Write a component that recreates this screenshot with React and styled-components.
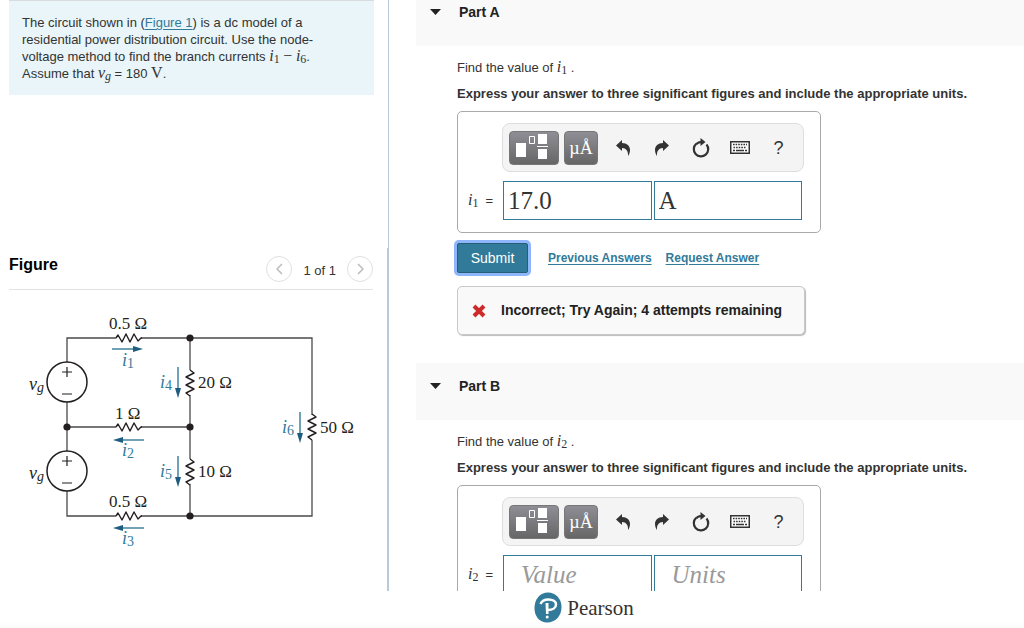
import React, { useState } from 'react';
import styled, { createGlobalStyle } from 'styled-components';

const teal = '#327a99';
const sans = '"Liberation Sans", Arial, sans-serif';
const serif = '"Liberation Serif", "Times New Roman", serif';

const GlobalStyle = createGlobalStyle`
  * {
    box-sizing: border-box;
  }

  body {
    margin: 0;
    background: #fff;
    color: #333;
    font: 13px/17px ${sans};
  }
`;

const Page = styled.div`
  display: flex;
  flex-direction: column;
  height: 100vh;
`;

const Main = styled.main`
  display: flex;
  flex: 1;
  min-height: 0;
  overflow: hidden;
`;

const Sidebar = styled.aside`
  display: flex;
  flex: none;
  flex-direction: column;
  width: 389px;
`;

const ProblemPane = styled.section`
  height: 248px;
  padding: 0 14px 0 9px;
  border-right: 1px solid #b9c9dc;
`;

const Statement = styled.p`
  margin: 0;
  padding: 13px 32px 13px 13px;
  border-top: 1px solid #d8dcdd;
  background: #e9f5f8;
`;

const TextLink = styled.a`
  color: ${teal};
  text-decoration: underline;
  text-underline-offset: 2px;
`;

const MathText = styled.span`
  font-family: ${serif};
  font-size: 16px;
  font-style: ${({ $upright }) => ($upright ? 'normal' : 'italic')};
  line-height: 1;

  sub {
    font-size: 12px;
    font-style: ${({ $italicSub }) => ($italicSub ? 'italic' : 'normal')};
    line-height: 0;
    vertical-align: -2px;
  }
`;

const FigurePane = styled.section`
  flex: 1;
  border-right: 2px solid #b9c9dc;
`;

const FigureHeader = styled.header`
  display: flex;
  align-items: center;
  justify-content: space-between;
  height: 42px;
  margin: 0 14px 0 9px;
  border-bottom: 1px solid #e2e2e2;

  h2 {
    margin: 0;
    padding-bottom: 8px;
    color: #000;
    font-size: 16px;
  }
`;

const Pager = styled.nav`
  display: flex;
  align-items: center;
  gap: 11px;

  span {
    padding-top: 3px;
  }
`;

const PagerButton = styled.button`
  display: flex;
  align-items: center;
  justify-content: center;
  width: 26px;
  height: 26px;
  padding: 0;
  border: 1px solid #e0e0e0;
  border-radius: 50%;
  background: #fff;
`;

const Circuit = styled.svg`
  display: block;
  width: 386px;
  height: 270px;
  font-family: ${serif};
  font-size: 17px;
  fill: #231f20;

  .var {
    font-size: 18px;
    font-style: italic;
  }

  .var-sub {
    font-size: 14px;
    font-style: italic;
  }

  .sub {
    font-size: 14px;
  }

  .current {
    fill: ${teal};
  }
`;

const Parts = styled.div`
  flex: 1;
  min-width: 0;
  padding-left: 27px;
`;

const Part = styled.section`
  margin-bottom: 28px;
`;

const PartHeader = styled.header`
  display: flex;
  gap: 18px;
  height: ${({ $first }) => ($first ? 46 : 57)}px;
  padding: ${({ $first }) => ($first ? 4 : 15)}px 14px 0;
  background: #f9f9f9;

  h3 {
    margin: 0;
    color: #222;
    font-size: 14px;
  }
`;

const Toggle = styled.button`
  display: flex;
  align-items: center;
  height: 16px;
  padding: 0;
  border: 0;
  background: none;
`;

const PartBody = styled.div`
  padding: 13px 16px 0 41px;

  p {
    margin: 0 0 9px;
  }
`;

const AnswerBox = styled.div`
  width: 364px;
  height: 122px;
  padding: 11px 16px 11px 10px;
  border: 1px solid #a9a9a9;
  border-radius: 5px;
`;

const Toolbar = styled.div`
  display: flex;
  align-items: center;
  height: 49px;
  margin-left: 34px;
  padding-left: 6px;
  border: 1px solid #dedede;
  border-radius: 8px;
  background: #f4f4f4;
`;

const PaletteButton = styled.button`
  display: flex;
  align-items: center;
  justify-content: center;
  width: ${({ $wide }) => ($wide ? 50 : 34)}px;
  height: 34px;
  margin-right: 5px;
  padding: 0;
  border: 1px solid #777;
  border-radius: 4px;
  background: linear-gradient(#8f8e96, #666);
  color: #fff;
  font: 18px/32px ${serif};
`;

const ToolButton = styled.button`
  display: flex;
  align-items: center;
  justify-content: center;
  width: 39px;
  height: 34px;
  padding: 0;
  border: 0;
  background: none;
  color: #333;
  font: 18px/34px ${sans};
`;

const AnswerRow = styled.div`
  display: flex;
  align-items: center;
  gap: 2px;
  margin: 9px 2px 0 0;

  label {
    display: flex;
    align-items: baseline;
    gap: 7px;
    width: 33px;
  }
`;

const AnswerInput = styled.input`
  flex: 1;
  min-width: 0;
  height: 39px;
  padding: 0 ${({ $empty }) => ($empty ? 17 : 4)}px;
  border: 1px solid ${teal};
  border-radius: 0;
  color: #333;
  font: 25px/30px ${serif};

  &::placeholder {
    color: #999;
    font-style: italic;
    opacity: 1;
  }
`;

const Actions = styled.div`
  display: flex;
  align-items: center;
  gap: 14px;
  margin-top: 10px;
  font-size: 12px;
  font-weight: bold;
`;

const SubmitButton = styled.button`
  width: 71px;
  height: 30px;
  margin-right: 6px;
  padding: 0;
  border: 1px solid #235f78;
  border-radius: 2px;
  background: ${teal};
  box-shadow: 0 0 0 3px #8fb5fa;
  color: #fff;
  font: 14px/17px ${sans};
`;

const Feedback = styled.div`
  display: flex;
  align-items: center;
  gap: 15px;
  width: 348px;
  height: 49px;
  margin-top: 13px;
  padding-left: 14px;
  border: 1px solid #c8c8c8;
  border-radius: 5px;
  background: #f9f9f9;
  box-shadow: 1px 1px 1px #bbb;
  color: #222;
  font-size: 14px;
  font-weight: bold;
  white-space: nowrap;
`;

const Footer = styled.footer`
  display: flex;
  flex: none;
  align-items: center;
  justify-content: center;
  gap: 5px;
  height: 37px;
  padding: 0 0 4px 144px;
  background: linear-gradient(#fff 30px, #fbfbfb);
  color: #37322f;
  font: 21px/24px ${serif};
`;

const Variable = ({ name = 'i', sub }) => (
  <MathText $italicSub={name === 'v'}>
    {name}
    <sub>{sub}</sub>
  </MathText>
);

// both resistors start on the wire at x, y and run for about 25px
const HResistor = ({ x, y }) => (
  <path d={`M${x} ${y}l2-3 4 7 4-8 4 8 4-8 4 7 3-3h1`} />
);

const VResistor = ({ x, y }) => (
  <path d={`M${x} ${y}l4 3-8 4 8 4-8 4 8 4-8 4 4 3`} />
);

const Arrow = ({ x, y, dir }) => {
  const angle = { right: 0, down: 90, left: 180 }[dir];
  return (
    <g transform={`translate(${x} ${y}) rotate(${angle})`}>
      <path d="M0 0H24" stroke={teal} strokeWidth="1.4" />
      <path d="M21-3L31 0L21 3Z" fill="#1f5d80" />
    </g>
  );
};

const Current = ({ x, y, sub }) => (
  <text className="current" x={x} y={y}>
    <tspan className="var">i</tspan>
    <tspan className="sub" dy="2">{sub}</tspan>
  </text>
);

const Source = ({ y }) => (
  <g>
    <circle cx="67" cy={y} r="20" fill="#fff" stroke="#231f20" strokeWidth="1.5" />
    <path d={`M62 ${y - 10}h10M67 ${y - 15}v10M62 ${y + 12}h10`} stroke="#231f20" strokeWidth="1.2" />
    <text x="29" y={y + 8}>
      <tspan className="var">v</tspan>
      <tspan className="var-sub" dy="2">g</tspan>
    </text>
  </g>
);

const CircuitDiagram = () => (
  <Circuit viewBox="0 290 386 270" role="img" aria-label="Residential power distribution circuit">
    <g fill="none" stroke="#4a4a4a" strokeWidth="1.3">
      <path d="M116 338H67V516H116M141 338H312V415M312 440V516H141M67 427H116M141 427H190M190 338V370M190 395V459M190 484V516" />
    </g>
    <g fill="none" stroke="#231f20" strokeWidth="1.4" strokeLinejoin="round">
      <HResistor x={116} y={338} />
      <HResistor x={116} y={427} />
      <HResistor x={116} y={516} />
      <VResistor x={190} y={370} />
      <VResistor x={190} y={459} />
      <VResistor x={312} y={414} />
    </g>
    {[[190, 338], [67, 427], [190, 427], [190, 516]].map(([cx, cy]) => (
      <circle key={`${cx}-${cy}`} cx={cx} cy={cy} r="3.6" />
    ))}
    <Source y={382} />
    <Source y={471} />
    <Arrow x={112} y={349} dir="right" />
    <Arrow x={144} y={440} dir="left" />
    <Arrow x={144} y={528} dir="left" />
    <Arrow x={178} y={367} dir="down" />
    <Arrow x={178} y={456} dir="down" />
    <Arrow x={300} y={412} dir="down" />
    <text x="109" y="329">0.5 Ω</text>
    <text x="115" y="419">1 Ω</text>
    <text x="109" y="507">0.5 Ω</text>
    <text x="198" y="388">20 Ω</text>
    <text x="198" y="477">10 Ω</text>
    <text x="320" y="433">50 Ω</text>
    <Current x={122} y={366} sub="1" />
    <Current x={122} y={456} sub="2" />
    <Current x={122} y={544} sub="3" />
    <Current x={160} y={388} sub="4" />
    <Current x={160} y={477} sub="5" />
    <Current x={282} y={433} sub="6" />
  </Circuit>
);

const TemplateIcon = () => (
  <svg width="36" height="28" viewBox="0 0 36 28" fill="#fff">
    <path d="M0 9h10v14H0zM22 0h9v10h-9zM22 15h9v10h-9zM21 12h11v1H21z" />
    <path d="M13.5 2.5h5v7h-5z" fill="none" stroke="#fff" />
  </svg>
);

const UndoIcon = ({ flip }) => (
  <svg width="14" height="16" viewBox="0 0 14 16" fill="#333">
    <path
      transform={flip ? 'matrix(-1 0 0 1 14 0)' : undefined}
      d="M0 5.5L6 0V3C11 3 14 6 14 10C14 12.5 13 15 12 16C12.5 11 10 8 6 8V11Z"
    />
  </svg>
);

const ResetIcon = () => (
  <svg width="18" height="20" viewBox="0 0 18 20">
    <path d="M4.2 5.8A7.2 7.2 0 1 0 14.5 6.5" fill="none" stroke="#333" strokeWidth="2.2" />
    <path d="M3.5 5.5C5 4 6.5 3.2 8.5 3V0L13.5 4L8.5 8V5.2C7 5.4 6 6 5 7Z" fill="#333" />
  </svg>
);

const KeyboardIcon = () => (
  <svg width="20" height="13" viewBox="0 0 20 13">
    <rect x=".75" y=".75" width="18.5" height="11.5" fill="#fff" stroke="#333" strokeWidth="1.5" />
    <path d="M3 3.5h14M3.5 6.5h13" stroke="#333" strokeWidth="1.6" strokeDasharray="1.6 1" />
    <path d="M3 9.5h2M6 9.5h8M15 9.5h2" stroke="#333" strokeWidth="1.4" />
  </svg>
);

const PearsonLogo = () => (
  <svg width="28" height="31" viewBox="0 0 28 31">
    <path d="M14 .5C22 .5 27.5 7 27.5 15C27.5 24 21.5 30.5 13 30.5C5 30.5 .5 24 .5 16C.5 7 6 .5 14 .5Z" fill={teal} />
    <path d="M6.5 12C8 8.5 11.5 7.5 14.5 7.5C19 7.5 22 9.5 22 12.5C22 16 18.5 18 14 18" fill="none" stroke="#fff" strokeWidth="2.5" />
    <path d="M11.5 11H14.5V22H12Z" fill="#fff" />
    <circle cx="13.2" cy="25" r="1.5" fill="#fff" />
  </svg>
);

const AnswerPart = ({ title, sub, first, initial = ['', ''], children }) => {
  const [value, setValue] = useState(initial[0]);
  const [units, setUnits] = useState(initial[1]);

  return (
    <Part>
      <PartHeader $first={first}>
        <Toggle type="button" aria-label={`Toggle ${title}`}>
          <svg width="11" height="6" viewBox="0 0 11 6"><path d="M0 0h11L5.5 6z" fill="#222" /></svg>
        </Toggle>
        <h3>{title}</h3>
      </PartHeader>
      <PartBody>
        <p>
          Find the value of <Variable sub={sub} /> .
        </p>
        <p>
          <strong>Express your answer to three significant figures and include the appropriate units.</strong>
        </p>
        <AnswerBox>
          <Toolbar>
            <PaletteButton type="button" $wide aria-label="Templates"><TemplateIcon /></PaletteButton>
            <PaletteButton type="button">µÅ</PaletteButton>
            <ToolButton type="button" aria-label="Undo"><UndoIcon /></ToolButton>
            <ToolButton type="button" aria-label="Redo"><UndoIcon flip /></ToolButton>
            <ToolButton type="button" aria-label="Reset"><ResetIcon /></ToolButton>
            <ToolButton type="button" aria-label="Keyboard shortcuts"><KeyboardIcon /></ToolButton>
            <ToolButton type="button">?</ToolButton>
          </Toolbar>
          <AnswerRow>
            <label htmlFor={`value-${sub}`}>
              <Variable sub={sub} />
              <span>=</span>
            </label>
            <AnswerInput
              id={`value-${sub}`}
              placeholder="Value"
              value={value}
              $empty={!value}
              onChange={(e) => setValue(e.target.value)}
            />
            <AnswerInput
              aria-label="Units"
              placeholder="Units"
              value={units}
              $empty={!units}
              onChange={(e) => setUnits(e.target.value)}
            />
          </AnswerRow>
        </AnswerBox>
        {children}
      </PartBody>
    </Part>
  );
};

const App = () => (
  <Page>
    <GlobalStyle />
    <Main>
      <Sidebar>
        <ProblemPane>
          <Statement>
            The circuit shown in (<TextLink href="#figure">Figure 1</TextLink>) is a dc model of a
            {' '}residential power distribution circuit. Use the node-voltage method to find the
            {' '}branch currents <Variable sub="1" /> <MathText $upright>−</MathText> <Variable sub="6" />.
            {' '}Assume that <Variable name="v" sub="g" /> = 180 <MathText $upright>V</MathText>.
          </Statement>
        </ProblemPane>
        <FigurePane id="figure">
          <FigureHeader>
            <h2>Figure</h2>
            <Pager>
              <PagerButton type="button" aria-label="Previous figure">
                <svg width="7" height="12" viewBox="0 0 7 12"><path d="M6 1L1 6l5 5" fill="none" stroke="#bbb" strokeWidth="1.5" /></svg>
              </PagerButton>
              <span>1 of 1</span>
              <PagerButton type="button" aria-label="Next figure">
                <svg width="7" height="12" viewBox="0 0 7 12"><path d="M1 1l5 5-5 5" fill="none" stroke="#bbb" strokeWidth="1.5" /></svg>
              </PagerButton>
            </Pager>
          </FigureHeader>
          <CircuitDiagram />
        </FigurePane>
      </Sidebar>
      <Parts>
        <AnswerPart title="Part A" sub="1" first initial={['17.0', 'A']}>
          <Actions>
            <SubmitButton type="button">Submit</SubmitButton>
            <TextLink href="#previous">Previous Answers</TextLink>
            <TextLink href="#request">Request Answer</TextLink>
          </Actions>
          <Feedback>
            <svg width="14" height="14" viewBox="0 0 14 14">
              <path d="M2 2l10 10M12 2L2 12" stroke="#cf2a2a" strokeWidth="4" />
            </svg>
            Incorrect; Try Again; 4 attempts remaining
          </Feedback>
        </AnswerPart>
        <AnswerPart title="Part B" sub="2" />
      </Parts>
    </Main>
    <Footer>
      <PearsonLogo />
      Pearson
    </Footer>
  </Page>
);

export default App;
